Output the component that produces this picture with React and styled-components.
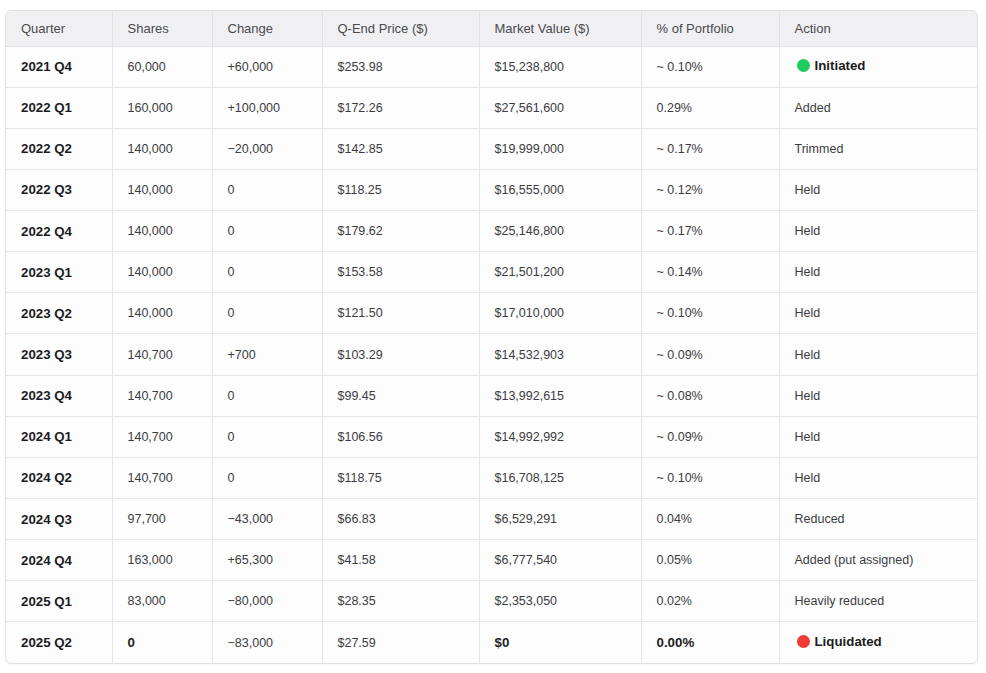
import React from "react";
import styled, { createGlobalStyle } from "styled-components";

const GlobalStyle = createGlobalStyle`
  body {
    margin: 0;
    background: #ffffff;
    font-family: "Liberation Sans", Arial, sans-serif;
  }
`;

const rows = [
  ["2021 Q4", "60,000", "+60,000", "$253.98", "$15,238,800", "~ 0.10%", "Initiated", "green"],
  ["2022 Q1", "160,000", "+100,000", "$172.26", "$27,561,600", "0.29%", "Added"],
  ["2022 Q2", "140,000", "−20,000", "$142.85", "$19,999,000", "~ 0.17%", "Trimmed"],
  ["2022 Q3", "140,000", "0", "$118.25", "$16,555,000", "~ 0.12%", "Held"],
  ["2022 Q4", "140,000", "0", "$179.62", "$25,146,800", "~ 0.17%", "Held"],
  ["2023 Q1", "140,000", "0", "$153.58", "$21,501,200", "~ 0.14%", "Held"],
  ["2023 Q2", "140,000", "0", "$121.50", "$17,010,000", "~ 0.10%", "Held"],
  ["2023 Q3", "140,700", "+700", "$103.29", "$14,532,903", "~ 0.09%", "Held"],
  ["2023 Q4", "140,700", "0", "$99.45", "$13,992,615", "~ 0.08%", "Held"],
  ["2024 Q1", "140,700", "0", "$106.56", "$14,992,992", "~ 0.09%", "Held"],
  ["2024 Q2", "140,700", "0", "$118.75", "$16,708,125", "~ 0.10%", "Held"],
  ["2024 Q3", "97,700", "−43,000", "$66.83", "$6,529,291", "0.04%", "Reduced"],
  ["2024 Q4", "163,000", "+65,300", "$41.58", "$6,777,540", "0.05%", "Added (put assigned)"],
  ["2025 Q1", "83,000", "−80,000", "$28.35", "$2,353,050", "0.02%", "Heavily reduced"],
  ["2025 Q2", "0", "−83,000", "$27.59", "$0", "0.00%", "Liquidated", "red", true],
];

const headers = [
  ["Quarter", 106],
  ["Shares", 100],
  ["Change", 110],
  ["Q-End Price ($)", 157],
  ["Market Value ($)", 162],
  ["% of Portfolio", 138],
  ["Action"],
];

const App = () => (
  <Page>
    <GlobalStyle />
    <Card>
      <Table>
        <colgroup>
          {headers.map(([label, w]) => (
            <col key={label} style={w ? { width: w } : undefined} />
          ))}
        </colgroup>
        <thead>
          <tr>
            {headers.map(([label]) => (
              <Th key={label}>{label}</Th>
            ))}
          </tr>
        </thead>
        <tbody>
          {rows.map(([q, shares, change, price, value, pct, action, dot, final]) => (
            <tr key={q}>
              <QuarterCell>{q}</QuarterCell>
              <Td $bold={final}>{shares}</Td>
              <Td>{change}</Td>
              <Td>{price}</Td>
              <Td $bold={final}>{value}</Td>
              <Td $bold={final}>{pct}</Td>
              <Td>
                {dot ? (
                  <Status>
                    <Dot $color={dot} />
                    {action}
                  </Status>
                ) : (
                  action
                )}
              </Td>
            </tr>
          ))}
        </tbody>
      </Table>
    </Card>
  </Page>
);

const Page = styled.div`
  padding: 10px 8px 10px 5px;
`;

const Card = styled.div`
  border: 1px solid #e2e2e6;
  border-radius: 6px;
  overflow: hidden;
  background: #fdfdfd;
  box-shadow: 0 1px 2px rgba(0, 0, 0, 0.04);
`;

const Table = styled.table`
  width: 100%;
  border-collapse: collapse;
  table-layout: fixed;

  th,
  td {
    box-sizing: border-box;
  }
  tr > *:last-child {
    border-right: none;
  }
  tbody tr:last-child td {
    border-bottom: none;
  }
`;

const Th = styled.th`
  height: 35px;
  padding: 0 15px;
  background: #f0f0f2;
  color: #4a4a4f;
  font-size: 13px;
  font-weight: normal;
  text-align: left;
  border-right: 1px solid #e2e2e6;
  border-bottom: 1px solid #e2e2e6;
`;

const Td = styled.td`
  height: 41.15px;
  padding: 0 15px;
  color: ${(p) => (p.$bold ? "#1c1c1f" : "#3c3c41")};
  font-size: ${(p) => (p.$bold ? "13.3px" : "12.5px")};
  font-weight: ${(p) => (p.$bold ? "bold" : "normal")};
  border-right: 1px solid #e6e6ea;
  border-bottom: 1px solid #e6e6ea;
  white-space: nowrap;
`;

const QuarterCell = styled(Td)`
  color: #1c1c1f;
  font-size: 13.3px;
  font-weight: bold;
`;

const Status = styled.span`
  display: inline-flex;
  align-items: center;
  gap: 5px;
  color: #1c1c1f;
  font-size: 13.3px;
  font-weight: bold;
`;

const Dot = styled.span`
  width: 13px;
  height: 13px;
  margin-left: 2px;
  border-radius: 50%;
  background: ${(p) => (p.$color === "green" ? "#1ecb5c" : "#f03a35")};
`;

export default App;
